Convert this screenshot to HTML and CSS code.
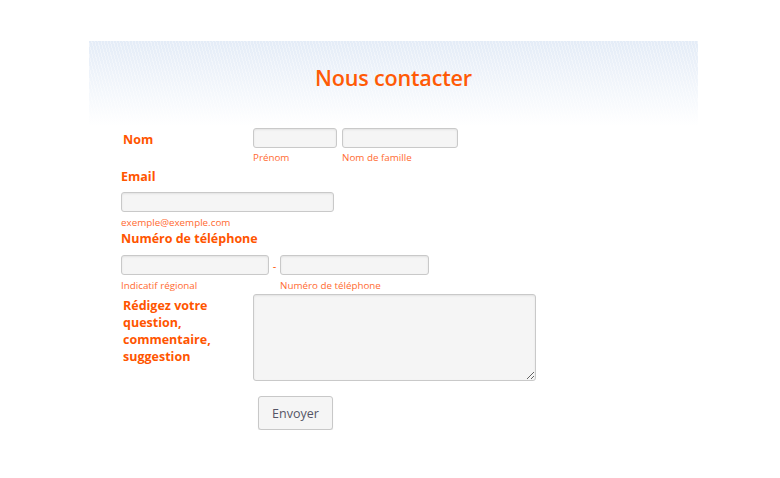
FILE: index.html
```html
<!DOCTYPE html>
<html>
<head>
<meta charset="utf-8">
<link rel="stylesheet" href="styles.css">
</head>
<body>
<div class="page">
  <div class="header"><h1 class="title">Nous contacter</h1></div>
  <form class="form">
    <div class="row row-nom">
      <label class="label label-side">Nom</label>
      <div class="fields">
        <div class="field"><input class="input in-first" type="text"><span class="sub">Prénom</span></div>
        <div class="field"><input class="input in-last" type="text"><span class="sub">Nom de famille</span></div>
      </div>
    </div>
    <div class="block block-email">
      <label class="label">Email</label>
      <div class="field"><input class="input in-email" type="text"><span class="sub">exemple@exemple.com</span></div>
    </div>
    <div class="block block-phone">
      <label class="label">Numéro de téléphone</label>
      <div class="fields">
        <div class="field"><input class="input in-area" type="text"><span class="sub">Indicatif régional</span></div>
        <span class="dash">-</span>
        <div class="field"><input class="input in-phone" type="text"><span class="sub">Numéro de téléphone</span></div>
      </div>
    </div>
    <div class="row row-msg">
      <label class="label label-side label-msg">Rédigez votre question, commentaire, suggestion</label>
      <textarea class="textarea"></textarea>
    </div>
    <div class="row row-btn">
      <button class="btn" type="button">Envoyer</button>
    </div>
  </form>
</div>
</body>
</html>
```
FILE: styles.css
```css
html, body { margin: 0; padding: 0; background: #fff; }
body { font-family: "Open Sans", "Liberation Sans", sans-serif; }
.page { width: 609px; margin: 41px 0 0 89px; }
.header {
  height: 85px;
  background:
    repeating-linear-gradient(75deg, rgba(255,255,255,0.35) 0 1px, rgba(255,255,255,0) 1px 3px),
    linear-gradient(#e4ecf7, #ffffff);
  display: flex; justify-content: center;
}
.title {
  margin: 21px 0 0 0;
  font-size: 21.6px; font-weight: 600; color: #ff5a06; line-height: 32px;
  letter-spacing: -0.2px;
}
.form { padding: 2px 0 0 32px; }
.row { display: flex; }
.label { color: #ff5500; font-weight: 700; font-size: 12.5px; line-height: 17px; display: block; }
.label-side { width: 130px; padding-left: 2px; }
.row-nom .label { padding-top: 3px; }
.fields { display: flex; align-items: flex-start; }
.field { display: flex; flex-direction: column; margin-right: 5px; }
.input {
  box-sizing: border-box; height: 20px; margin: 0; padding: 0 4px;
  border: 1px solid #c9c9c9; border-radius: 3px; background: #f5f5f5;
  box-shadow: inset 0 1px 2px rgba(0,0,0,0.08);
}
.sub { font-size: 9.8px; color: #ff6a30; line-height: 12px; margin-top: 4px; }
.block .sub { margin-top: 5px; }
.in-first { width: 84px; }
.in-last { width: 116px; }
.block-email { margin-top: 4px; }
.block-email .field { margin-top: 7px; }
.in-email { width: 213px; }
.block-phone { margin-top: 1px; }
.block-phone .fields { margin-top: 8px; }
.in-area { width: 148px; }
.in-phone { width: 149px; }
.block-phone .field { margin-right: 0; }
.dash { font-size: 11px; color: #ff5500; width: 11px; text-align: center; line-height: 20px; margin-top: 1px; }
.row-msg { margin-top: 2px; }
.label-msg { padding-top: 3px; width: 130px; }
.textarea {
  box-sizing: border-box; width: 283px; height: 87px; margin: 0;
  border: 1px solid #c9c9c9; border-radius: 3px; background: #f5f5f5;
  box-shadow: inset 0 1px 2px rgba(0,0,0,0.08);
}
.row-btn { padding-left: 137px; margin-top: 15px; }
.btn {
  box-sizing: border-box; width: 75px; height: 34px;
  font-family: "Open Sans", "Liberation Sans", sans-serif; font-size: 12.5px; color: #556;
  background: #f5f5f5; border: 1px solid #c8c8c8; border-radius: 3px;
  box-shadow: 0 1px 1px rgba(0,0,0,0.1);
}
```
